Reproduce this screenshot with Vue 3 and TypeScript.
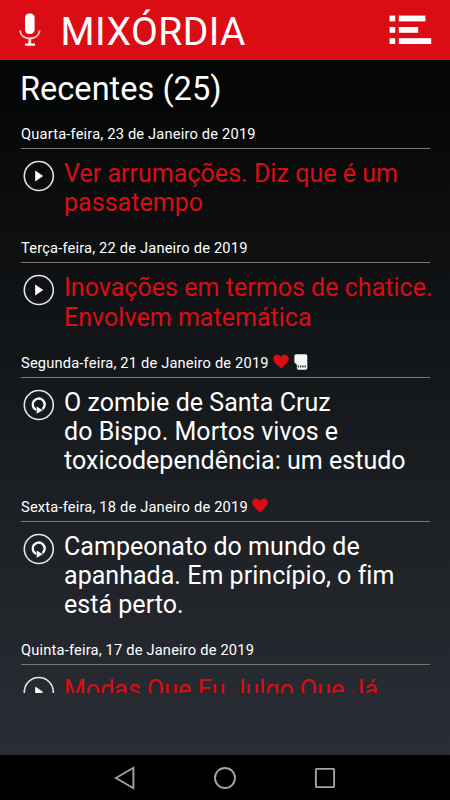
<script setup lang="ts">
interface Episode {
  date: string
  lines: string[]
  played: boolean
  favorite?: boolean
  saved?: boolean
}

const episodes: Episode[] = [
  { date: 'Quarta-feira, 23 de Janeiro de 2019', lines: ['Ver arrumações. Diz que é um', 'passatempo'], played: false },
  { date: 'Terça-feira, 22 de Janeiro de 2019', lines: ['Inovações em termos de chatice.', 'Envolvem matemática'], played: false },
  { date: 'Segunda-feira, 21 de Janeiro de 2019', lines: ['O zombie de Santa Cruz', 'do Bispo. Mortos vivos e', 'toxicodependência: um estudo'], played: true, favorite: true, saved: true },
  { date: 'Sexta-feira, 18 de Janeiro de 2019', lines: ['Campeonato do mundo de', 'apanhada. Em princípio, o fim', 'está perto.'], played: true, favorite: true },
  { date: 'Quinta-feira, 17 de Janeiro de 2019', lines: ['Modas Que Eu Julgo Que Já'], played: false },
]
</script>

<template>
  <div class="screen">
    <header class="bar">
      <svg class="mic" width="22" height="34" viewBox="0 0 22 34">
        <rect x="6" y="0.5" width="9.6" height="20.5" rx="4.2" fill="#fff" />
        <path d="M1 17.5C1.6 22.5 5.5 25.4 10.8 25.4S20 22.5 20.6 17.5" fill="none" stroke="#f6cccd" stroke-width="2" />
        <path d="M10.8 25.5V31" stroke="#f9dede" stroke-width="2.8" />
        <path d="M6 31.6H16" stroke="#fff" stroke-width="2.2" />
      </svg>
      <h1 class="brand">MIXÓRDIA</h1>
      <svg class="menu" width="43" height="30" viewBox="0 0 43 30" fill="#fff">
        <rect x="0.6" y="0.6" width="5.6" height="5.8" /><rect x="9.8" y="0.6" width="26.6" height="5.8" />
        <rect x="0.6" y="12" width="5.6" height="5.8" /><rect x="9.8" y="12" width="19.4" height="5.8" />
        <rect x="0.6" y="23.2" width="5.6" height="5.8" /><rect x="9.8" y="23.2" width="32.4" height="5.8" />
      </svg>
    </header>
    <main class="list">
      <h2 class="heading"><span>Recentes (25)</span></h2>
      <article v-for="ep in episodes" :key="ep.date" class="entry">
        <div class="date">
          <span class="day">{{ ep.date }}</span>
          <svg v-if="ep.favorite" class="heart" width="16" height="15" viewBox="0 0 16 15">
            <path d="M8 14.4C5.2 11.8.3 8.5.3 4.6.3 2.2 2 .5 4.2.5 5.9.5 7.2 1.4 8 3 8.8 1.4 10.1.5 11.8.5c2.2 0 3.9 1.7 3.9 4.1 0 3.9-4.9 7.2-7.7 9.8z" fill="#dc0c15" />
          </svg>
          <svg v-if="ep.saved" class="card" width="14" height="16" viewBox="0 0 14 16">
            <path d="M2 0.3H11.5Q13.3 .3 13.3 2V14Q13.3 15.7 11.7 15.7H4.5Q2.8 15.7 2.8 14V10.5L.4 8.6V2Q.4 .3 2 .3Z" fill="#f7f7f7" />
            <path d="M4.3 11.4V13.6M6.6 11.4V13.6M8.9 11.4V13.6M11.2 11.4V13.6" stroke="#33373a" stroke-width="1.4" />
          </svg>
        </div>
        <div class="body">
          <svg class="state" width="32" height="32" viewBox="0 0 32 32">
            <circle cx="15.8" cy="16" r="14.5" fill="none" stroke="#e6e6e6" stroke-width="1.6" />
            <template v-if="ep.played">
              <path d="M13 20.9A6 6 0 1 1 19.6 20.1" fill="none" stroke="#fff" stroke-width="2.4" />
              <path d="M13.6 17.6L19.9 21.3L13.6 24.8Z" fill="#fff" />
            </template>
            <path v-else d="M12.2 10.6L20.2 15.9L12.2 21.4Z" fill="#fff" />
          </svg>
          <h3 class="title" :class="{ fresh: !ep.played }">
            <span v-for="line in ep.lines" :key="line">{{ line }}</span>
          </h3>
        </div>
      </article>
    </main>
    <nav class="nav">
      <svg width="22" height="24" viewBox="0 0 22 24"><path d="M1.9 12L19.4 1.8V22.2Z" /></svg>
      <svg width="24" height="24" viewBox="0 0 24 24"><circle cx="12" cy="12" r="10" /></svg>
      <svg width="22" height="22" viewBox="0 0 22 22"><rect x="1.9" y="1.9" width="18.2" height="18.2" rx="0.6" /></svg>
    </nav>
  </div>
</template>

<style>
body {
  margin: 0;
  background: #000;
}
</style>

<style scoped>
.screen {
  display: flex;
  flex-direction: column;
  width: 450px;
  height: 800px;
  overflow: hidden;
  background: linear-gradient(#030404 60px, #14171a 370px, #22262b 610px, #2a2d36 755px);
  color: #fff;
  font-family: Roboto, "Liberation Sans", sans-serif;
  font-variant-ligatures: none;
}
.bar {
  flex: none;
  display: flex;
  box-sizing: border-box;
  height: 60px;
  padding: 13px 18.5px 0 19px;
  background: #dc0c15;
}
.mic {
  flex: none;
}
.brand {
  margin: 0 0 0 19.6px;
  font-size: 39px;
  line-height: 38px;
  font-weight: 400;
  letter-spacing: 0.45px;
}
.menu {
  flex: none;
  margin: 2px 0 0 auto;
}
.list {
  flex: none;
  height: 633px;
  box-sizing: border-box;
  padding: 10px 0 0 21px;
  overflow: hidden;
}
.heading {
  margin: 0 0 16.15px -1px;
  font-size: 32.5px;
  line-height: 38px;
  font-weight: 400;
  letter-spacing: 0.03px;
}
.entry {
  height: 114.3px;
  white-space: nowrap;
}
.entry:nth-of-type(n + 3) {
  height: 143.8px;
}
.date {
  display: flex;
  align-items: flex-start;
  box-sizing: border-box;
  width: 409px;
  height: 25px;
  border-bottom: 1px solid #777878;
  font-size: 14.67px;
  line-height: 20px;
  letter-spacing: 0.18px;
}
.heart {
  margin: 1px 0 0 4px;
}
.card {
  margin: 1px 0 0 5px;
}
.body {
  display: flex;
  padding: 10px 0 0 2px;
}
.state {
  flex: none;
  margin-top: 1px;
}
.title {
  margin: 0 0 0 9px;
  font-size: 25px;
  line-height: 29.33px;
  font-weight: 400;
  letter-spacing: 0.03px;
}
.title span {
  display: block;
}
.fresh {
  color: #dc0c15;
}
.nav {
  display: flex;
  flex: none;
  align-items: center;
  justify-content: space-between;
  box-sizing: border-box;
  height: 45px;
  margin-top: auto;
  padding: 0 114px;
  background: #000;
}
.nav svg {
  fill: none;
  stroke: #a3a3a3;
  stroke-width: 1.9;
}
</style>
